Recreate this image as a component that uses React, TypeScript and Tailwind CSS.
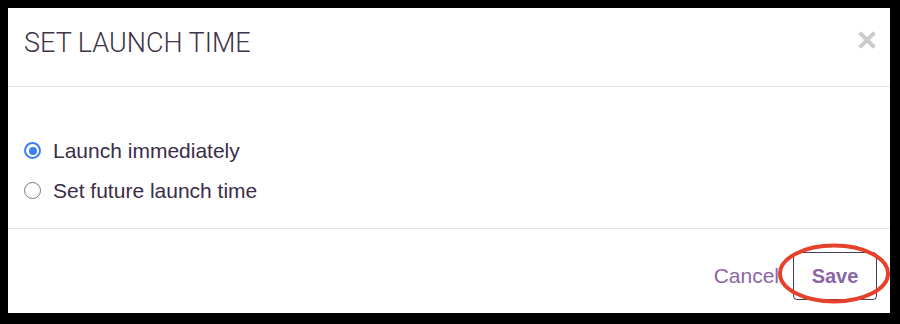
import React from "react";

const Radio = ({ checked }: { checked: boolean }) =>
    checked ? (
        <span className="flex h-[17px] w-[17px] items-center justify-center rounded-full border-2 border-[#3b7ef6] bg-white">
            <span className="h-[8px] w-[8px] rounded-full bg-[#3b7ef6]" />
        </span>
    ) : (
        <span className="h-[17px] w-[17px] rounded-full border-[1.5px] border-[#7a7a7a] bg-white" />
    );

const App = () => {
    return (
        <div className="relative h-[324px] w-[900px] bg-black pt-[8px] pl-[8px]">
            <div className="flex h-[305px] w-[882px] flex-col bg-white font-['Liberation_Sans',Arial,sans-serif] text-[#3b2d48]">
                {/* header */}
                <div className="flex h-[79px] items-start justify-between border-b border-[#e6e6e6] pl-[16px] pr-[14px]">
                    <h3 className="mt-[19px] font-['Roboto',sans-serif] text-[27px] font-light leading-[32px] text-[#3f3349]">
                        SET LAUNCH TIME
                    </h3>
                    <svg className="mt-[23px]" width="18" height="18" viewBox="0 0 18 18">
                        <path d="M3 3 L15 15 M15 3 L3 15" stroke="#cccccc" strokeWidth="4" strokeLinecap="square" />
                    </svg>
                </div>

                {/* body */}
                <div className="flex h-[142px] flex-col gap-[17px] border-b border-[#e6e6e6] pl-[16px] pt-[52px]">
                    <label className="flex items-center gap-[12px] text-[21px] leading-[23px]">
                        <Radio checked />
                        Launch immediately
                    </label>
                    <label className="flex items-center gap-[12px] text-[21px] leading-[23px]">
                        <Radio checked={false} />
                        Set future launch time
                    </label>
                </div>

                {/* footer */}
                <div className="flex flex-1 items-start justify-end pr-[13px] pt-[23px]">
                    <button className="mr-[14px] h-[48px] text-[21px] text-[#8a66a6]">Cancel</button>
                    <button className="h-[48px] w-[84px] rounded-[4px] border border-[#4a3a58] text-[20px] font-bold text-[#8a66a6]">
                        Save
                    </button>
                </div>
            </div>

            {/* annotation */}
            <svg className="pointer-events-none absolute left-0 top-0" width="900" height="324">
                <ellipse cx="834" cy="273.5" rx="54" ry="28" fill="none" stroke="#e5412b" strokeWidth="4" />
            </svg>
        </div>
    );
};

export default App;
